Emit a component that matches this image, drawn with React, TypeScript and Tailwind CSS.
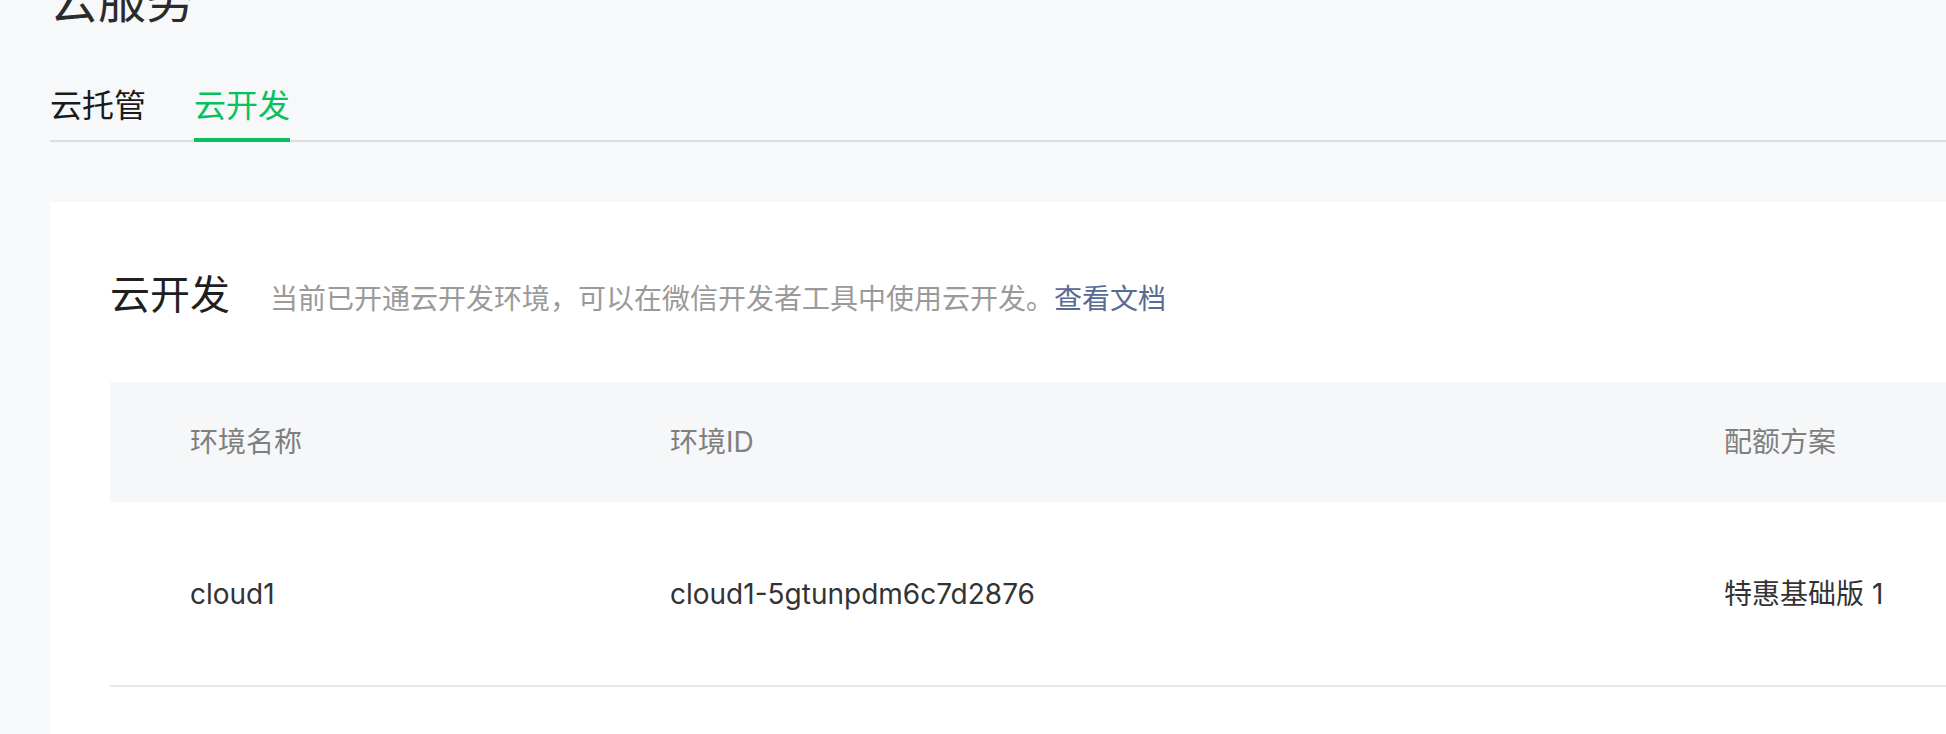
import React from 'react';

const tabs = [
  { key: 'tcb-run', label: '云托管', active: false },
  { key: 'tcb', label: '云开发', active: true },
];

const envs = [
  { name: 'cloud1', id: 'cloud1-5gtunpdm6c7d2876', plan: '特惠基础版 1' },
];

export default function App() {
  return (
    <div className="h-[734px] overflow-hidden bg-[#f7f8fa] font-['Inter','Noto_Sans_CJK_SC',sans-serif]">
      <div className="w-[2200px] pl-[50px]">
        <h1 className="mt-[-23px] text-[48px] leading-[48px] font-normal text-[#2b2b2b]">云服务</h1>

        <div className="mt-[65px] w-[2150px] flex gap-[48px] border-b-2 border-[#dcdde0]">
          {tabs.map(t => (
            <div
              key={t.key}
              className={`text-[32px] leading-[32px] pb-[16px] ${
                t.active ? 'text-[#07c160] border-b-4 border-[#07c160] -mb-[2px] pb-[14px]' : 'text-[#1a1a1a]'
              }`}
            >
              {t.label}
            </div>
          ))}
        </div>

        <div className="mt-[60px] bg-white pt-[65px] pl-[60px] pb-[60px]">
          <div className="flex items-baseline">
            <h2 className="text-[40px] leading-[56px] font-normal text-[#1f1f1f]">云开发</h2>
            <p className="ml-[40px] text-[28px] text-[#9a9a9a]">
              当前已开通云开发环境，可以在微信开发者工具中使用云开发。
              <span className="text-[#576b95]">查看文档</span>
            </p>
          </div>

          <div className="mt-[59px]">
            <div className="flex items-center h-[120px] bg-[#f6f7f9] text-[28px] text-[#7f7f7f]">
              <div className="w-[560px] pl-[80px]">环境名称</div>
              <div className="w-[1054px]">环境ID</div>
              <div>配额方案</div>
            </div>
            {envs.map(env => (
              <div
                key={env.id}
                className="flex items-center h-[185px] border-b-2 border-[#e6e6eb] text-[28px] text-[#333333]"
              >
                <div className="w-[560px] pl-[80px]">{env.name}</div>
                <div className="w-[1054px]">{env.id}</div>
                <div>{env.plan}</div>
              </div>
            ))}
          </div>
        </div>
      </div>
    </div>
  );
}
